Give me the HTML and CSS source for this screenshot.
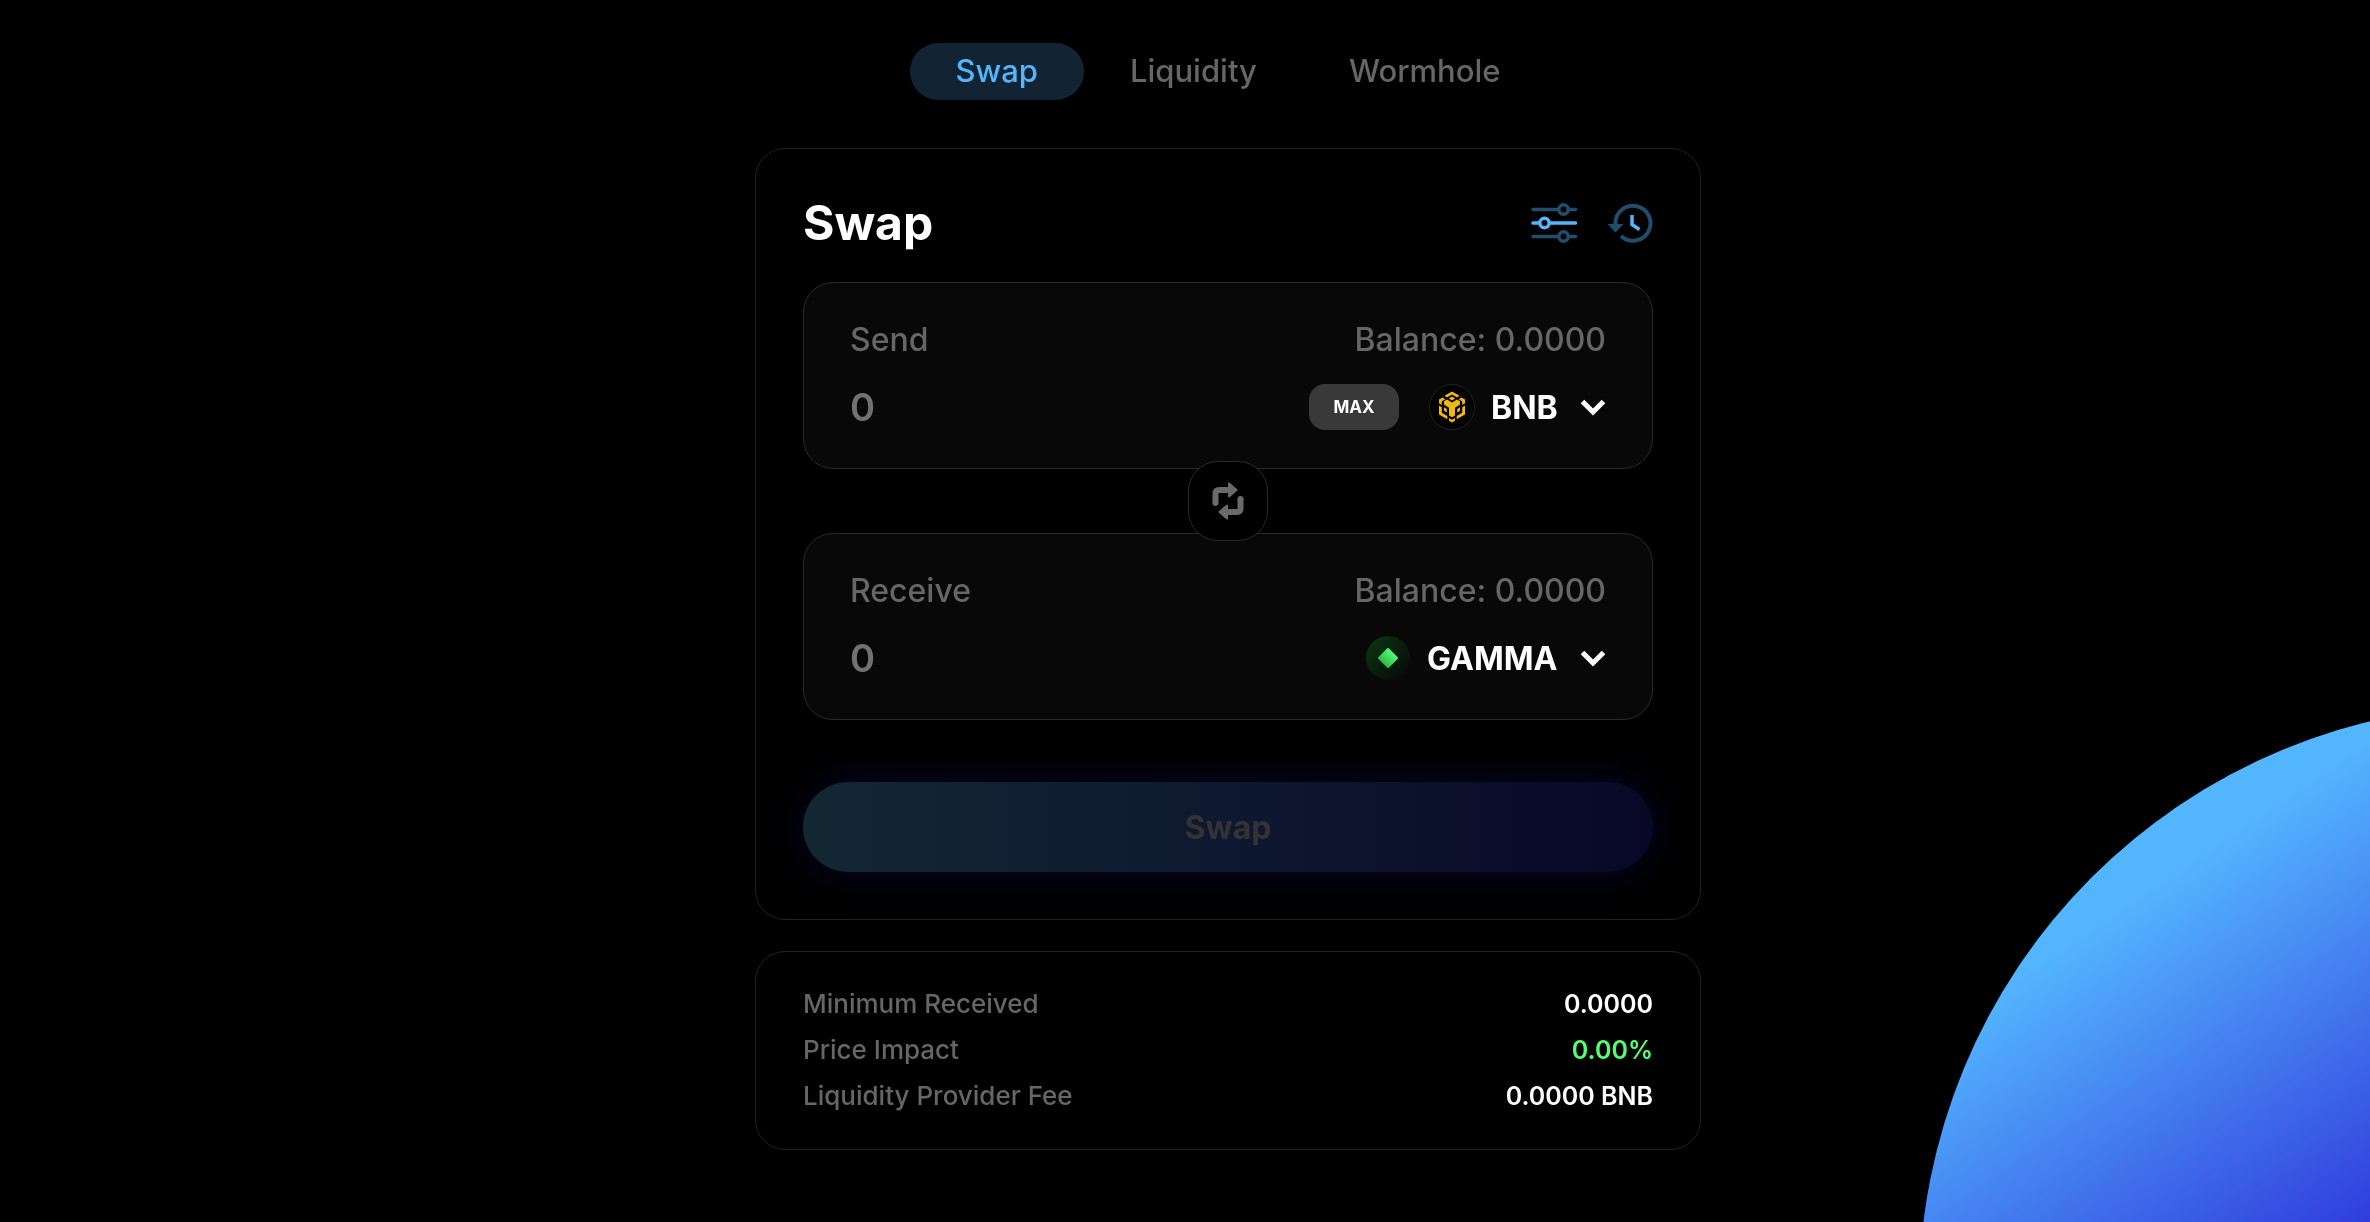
FILE: index.html
```html
<!DOCTYPE html>
<html lang="en">
<head>
    <meta charset="UTF-8">
    <meta name="viewport" content="width=device-width, initial-scale=1.0">
    <title>Swap</title>
    <link rel="stylesheet" href="styles.css">
</head>
<body>
    <div class="planet"></div>

    <main class="page">
        <nav class="tabs">
            <a class="tab active" href="#swap">Swap</a>
            <a class="tab" href="#liquidity">Liquidity</a>
            <a class="tab" href="#wormhole">Wormhole</a>
        </nav>

        <section class="card">
            <div class="card-header">
                <h1>Swap</h1>
                <div class="actions">
                    <button class="icon-btn" type="button" aria-label="Settings">
                        <svg width="46" height="40" viewBox="0 0 46 40" fill="none" stroke="#54b5ff" stroke-width="3.500" stroke-linecap="round">
                            <g stroke="#224c6b">
                                <path d="M2 6.500H27M38 6.500H44.500M2 33.500H27M38 33.500H44.500"/>
                                <circle cx="32.500" cy="6.500" r="4.700"/>
                                <circle cx="32.500" cy="33.500" r="4.700"/>
                            </g>
                            <path d="M2 20H8M19 20H44.500"/>
                            <circle cx="13.500" cy="20" r="4.700"/>
                        </svg>
                    </button>
                    <button class="icon-btn" type="button" aria-label="History">
                        <svg width="46" height="40" viewBox="0 0 46 40" fill="none">
                            <path d="M8.500 21A17.500 17.500 0 1 1 14 33" stroke="#224c6b" stroke-width="4"/>
                            <path d="M0.500 21H16.500L8.500 29.500Z" fill="#224c6b"/>
                            <path d="M25 12V21.500L32.500 26.500" stroke="#54b5ff" stroke-width="3.500"/>
                        </svg>
                    </button>
                </div>
            </div>

            <div class="field">
                <div class="row">
                    <label for="send">Send</label>
                    <span>Balance: 0.0000</span>
                </div>
                <div class="row">
                    <input id="send" class="amount" type="text" inputmode="decimal" placeholder="0">
                    <button class="max" type="button">MAX</button>
                    <div class="token">
                        <svg class="coin" width="46" height="46" viewBox="0 0 46 46">
                            <circle cx="23" cy="23" r="22.500" fill="#000" stroke="#222"/>
                            <g fill="#f0b90b">
                                <path d="M23 7.500L30.500 11.800L28 13.400L23 10.600L18 13.400L15.500 11.800Z"/>
                                <path d="M23 12.600L26.200 14.600L23 16.500L19.800 14.600Z"/>
                                <path d="M13.500 13.500L16.300 15.200L12.800 17.400V21L10 19.300V15.500Z"/>
                                <path d="M32.500 13.500L29.700 15.200L33.200 17.400V21L36 19.300V15.500Z"/>
                                <path d="M18 15.500L23 18.600L28 15.500L31 17.300V20.500L26 23.700V31.500L23 33.300L20 31.500V23.700L15 20.500V17.300Z"/>
                                <path d="M10 21.500L12.800 23.200V28.800L18.300 32V35.200L10 30.400Z"/>
                                <path d="M36 21.500L33.200 23.200V28.800L27.700 32V35.200L36 30.400Z"/>
                                <path d="M15 23.200L17.800 24.900V28.500L15 26.800Z"/>
                                <path d="M31 23.200L28.200 24.900V28.500L31 26.800Z"/>
                                <path d="M20 34L23 35.800L26 34V36.800L23 38.600L20 36.800Z"/>
                            </g>
                        </svg>
                        <select aria-label="Token to send">
                            <option>BNB</option>
                        </select>
                        <svg class="chevron" width="26" height="18" viewBox="0 0 26 18" fill="none" stroke="#fff" stroke-width="5">
                            <path d="M2.500 2.500L13 13L23.500 2.500"/>
                        </svg>
                    </div>
                </div>
            </div>

            <div class="switch-wrap">
                <button class="switch" type="button" aria-label="Switch tokens">
                    <svg width="34" height="40" viewBox="0 0 34 40" fill="none" stroke="#6a6a6a" stroke-width="6">
                        <path d="M4.500 22V12.500Q4.500 9 8 9H18M29.500 18V27.500Q29.500 31 26 31H16"/>
                        <circle cx="4.500" cy="22" r="3" fill="#6a6a6a" stroke="none"/>
                        <circle cx="29.500" cy="18" r="3" fill="#6a6a6a" stroke="none"/>
                        <path d="M18 2.500L25.500 9L18 15.500ZM16 24.500L8.500 31L16 37.500Z" fill="#6a6a6a" stroke-width="2" stroke-linejoin="round"/>
                    </svg>
                </button>
            </div>

            <div class="field">
                <div class="row">
                    <label for="receive">Receive</label>
                    <span>Balance: 0.0000</span>
                </div>
                <div class="row">
                    <input id="receive" class="amount" type="text" inputmode="decimal" placeholder="0">
                    <div class="token">
                        <svg class="coin" width="46" height="46" viewBox="0 0 46 46">
                            <defs>
                                <linearGradient id="gamma-bg" x1="0" y1="0" x2="1" y2="1">
                                    <stop offset="0" stop-color="#083a14"/>
                                    <stop offset="0.900" stop-color="#080a08"/>
                                </linearGradient>
                                <linearGradient id="gamma-gem" x1="1" y1="0" x2="0" y2="1">
                                    <stop offset="0.200" stop-color="#52ff6e"/>
                                    <stop offset="0.900" stop-color="#2ba845"/>
                                </linearGradient>
                            </defs>
                            <circle cx="23" cy="23" r="22" fill="url(#gamma-bg)"/>
                            <path d="M23 14L32 23L23 32L14 23Z" fill="url(#gamma-gem)" stroke="url(#gamma-gem)" stroke-width="2" stroke-linejoin="round"/>
                        </svg>
                        <select aria-label="Token to receive">
                            <option>GAMMA</option>
                        </select>
                        <svg class="chevron" width="26" height="18" viewBox="0 0 26 18" fill="none" stroke="#fff" stroke-width="5">
                            <path d="M2.500 2.500L13 13L23.500 2.500"/>
                        </svg>
                    </div>
                </div>
            </div>

            <button class="submit" type="button" disabled>Swap</button>
        </section>

        <dl class="card details">
            <div>
                <dt>Minimum Received</dt>
                <dd>0.0000</dd>
            </div>
            <div>
                <dt>Price Impact</dt>
                <dd class="good">0.00%</dd>
            </div>
            <div>
                <dt>Liquidity Provider Fee</dt>
                <dd>0.0000 BNB</dd>
            </div>
        </dl>
    </main>
</body>
</html>
```
FILE: styles.css
```css
* {
    box-sizing: border-box;
}

body {
    font-family: Inter, sans-serif;
    margin: 0;
    min-height: 100vh;
    background-color: #000;
    color: #fff;
}

button,
input,
select {
    font-family: inherit;
    color: inherit;
    border: none;
    background: none;
    padding: 0;
    margin: 0;
}

/* big circle in the corner */
.planet {
    position: fixed;
    right: -727px;
    bottom: -661px;
    width: 1178px;
    height: 1178px;
    border-radius: 50%;
    background: linear-gradient(146deg, #54b5ff 17%, #303bdc 42%);
}

.page {
    position: relative;
    display: flex;
    flex-direction: column;
    align-items: center;
    padding: 43px 0 48px 86px;
}

.tabs {
    display: flex;
    margin-bottom: 48px;
}

.tab {
    padding: 0 46px 2px;
    border-radius: 29px;
    font-size: 31px;
    font-weight: 500;
    line-height: 55px;
    color: #666;
    text-decoration: none;
}

.tab.active {
    background-color: #122433;
    color: #54b5ff;
}

.card {
    width: 100%;
    max-width: 946px;
    margin: 0 0 31px;
    padding: 47px;
    border: 1px solid #222;
    border-radius: 30px;
}

.card-header {
    display: flex;
    justify-content: space-between;
    align-items: center;
    margin-bottom: 32px;
}

h1 {
    margin: 0;
    font-size: 48px;
    line-height: 54px;
}

.actions {
    display: flex;
    gap: 30px;
}

.icon-btn svg {
    display: block;
}

.field {
    display: grid;
    grid-template-columns: minmax(0, 1fr);
    gap: 26px;
    padding: 38px 46px;
    border: 1px solid #2a2a2a;
    border-radius: 30px;
    background-color: #080808;
}

.row {
    display: flex;
    align-items: center;
    justify-content: space-between;
    font-size: 32px;
    font-weight: 500;
    line-height: 37px;
    color: #666;
}

.amount {
    flex: 1;
    min-width: 0;
    height: 46px;
    font-size: 38px;
    font-weight: 600;
    outline: none;
}

.amount::placeholder {
    color: #717171;
}

.max {
    width: 90px;
    height: 46px;
    margin-right: 30px;
    border-radius: 16px;
    background-color: #393939;
    color: #fff;
    font-size: 17px;
    font-weight: 700;
}

.token {
    position: relative;
    display: flex;
    align-items: center;
    gap: 16px;
    color: #fff;
}

.token select {
    appearance: none;
    padding-right: 48px;
    font-size: 32px;
    font-weight: 700;
    line-height: 37px;
}

.chevron {
    position: absolute;
    right: 0;
    top: 15px;
    pointer-events: none;
}

.switch-wrap {
    display: flex;
    justify-content: center;
    margin: -8px 0;
}

.switch {
    position: relative;
    display: flex;
    align-items: center;
    justify-content: center;
    width: 80px;
    height: 80px;
    border: 1px solid #2a2a2a;
    border-radius: 30px;
    background-color: #000;
}

.submit {
    width: 100%;
    height: 90px;
    margin-top: 62px;
    border-radius: 45px;
    background: linear-gradient(90deg, #132733, #0e1830 50%, #080826);
    box-shadow: 0 0 40px #060628;
    color: #333;
    font-size: 32px;
    font-weight: 700;
}

.details {
    display: grid;
    gap: 10px;
    margin-bottom: 0;
    padding: 34px 47px 35px;
    font-size: 26px;
    font-weight: 500;
    line-height: 36px;
}

.details div {
    display: flex;
    justify-content: space-between;
}

.details dt {
    color: #666;
}

.details dd {
    margin: 0;
    font-size: 25px;
    font-weight: 600;
}

.details .good {
    color: #52ff6e;
}
```
